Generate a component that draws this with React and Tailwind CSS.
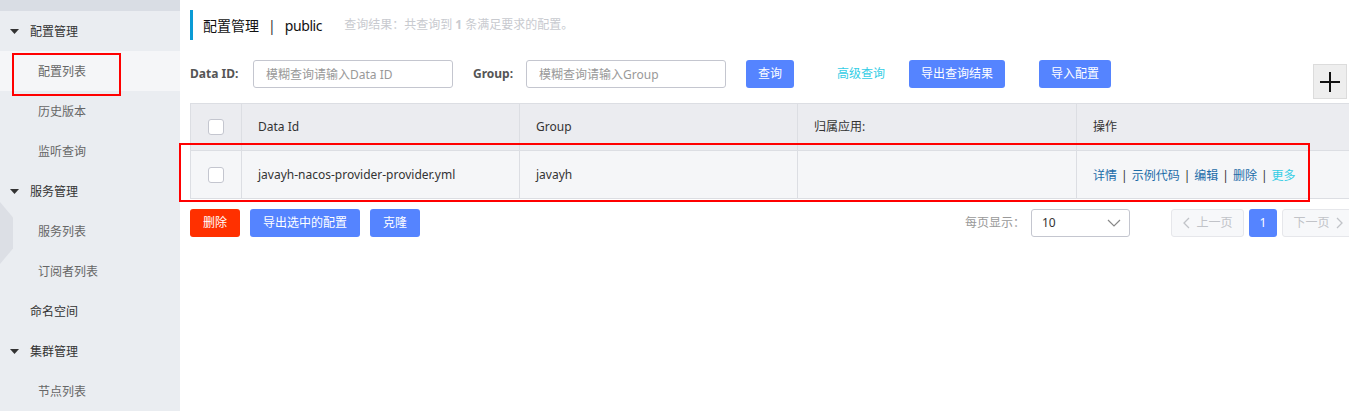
import React from "react";

const FONT = { fontFamily: '"Noto Sans", "Noto Sans CJK SC", sans-serif' };

const MENU = [
  { label: "配置管理", group: true },
  { label: "配置列表", active: true },
  { label: "历史版本" },
  { label: "监听查询" },
  { label: "服务管理", group: true },
  { label: "服务列表" },
  { label: "订阅者列表" },
  { label: "命名空间", top: true },
  { label: "集群管理", group: true },
  { label: "节点列表" },
];

function Caret() {
  return (
    <svg width="9" height="5" viewBox="0 0 9 5" className="mr-[11px]">
      <path d="M0 0 H9 L4.5 5 Z" fill="#333" />
    </svg>
  );
}

function Sidebar() {
  return (
    <div className="relative w-[180px] shrink-0 bg-[#eaedf1] h-full">
      <div className="h-[11px] bg-[#d9dde4]" />
      {MENU.map((m) => (
        <div
          key={m.label}
          className={`h-10 flex items-center pt-[1px] text-[12px] ${
            m.active ? "bg-[#f5f6f8]" : ""
          } ${m.group ? "pl-[10px] text-[#333]" : m.top ? "pl-[30px] text-[#333]" : "pl-[38px] text-[#666]"}`}
        >
          {m.group && <Caret />}
          {m.label}
        </div>
      ))}
      {/* red highlight box */}
      <div className="absolute left-[12px] top-[53px] w-[109px] h-[43px] border-2 border-[#ff0000]" />
      {/* collapse handle */}
      <div
        className="absolute left-0 top-[202px] w-[13px] h-[62px] bg-[#dcdfe5]"
        style={{ clipPath: "polygon(0 0, 100% 25%, 100% 75%, 0 100%)" }}
      />
    </div>
  );
}

function Btn({ children, className = "" }) {
  return (
    <button
      className={`h-7 px-3 rounded-[3px] text-white text-[12px] bg-[#5584ff] ${className}`}
    >
      {children}
    </button>
  );
}

function Checkbox() {
  return <div className="w-4 h-4 bg-white border border-[#c4c6cf] rounded-[3px]" />;
}

function Sep() {
  return <span className="text-[#333] mx-[4px]">|</span>;
}

export default function App() {
  return (
    <div className="flex h-[411px] w-[1349px] overflow-hidden bg-white" style={FONT}>
      <Sidebar />
      <div className="relative w-[1185px] shrink-0 pl-[10px] pr-[10px] pt-[10px]">
        {/* title */}
        <div className="flex items-center h-[30px]">
          <div className="w-[3px] h-[30px] bg-[#0a9bd5] mr-[10px]" />
          <span className="text-[14px] text-[#111]">配置管理</span>
          <span className="text-[14px] text-[#333] mx-[9px]">|</span>
          <span className="text-[14px] text-[#111] tracking-[-0.4px]">public</span>
          <span className="ml-[22px] text-[12px] text-[#c8cacf]">
            查询结果：共查询到 <b className="font-bold">1</b> 条满足要求的配置。
          </span>
        </div>

        {/* search row */}
        <div className="flex items-center mt-[20px] h-7">
          <span className="text-[12px] font-bold text-[#555] w-[51px]">Data ID:</span>
          <input
            className="ml-3 w-[200px] h-7 border border-[#c4c6cf] rounded-[3px] px-3 text-[12px] placeholder-[#999] outline-none"
            placeholder="模糊查询请输入Data ID"
          />
          <span className="ml-5 text-[12px] font-bold text-[#555] w-[41px]">Group:</span>
          <input
            className="ml-3 w-[200px] h-7 border border-[#c4c6cf] rounded-[3px] px-3 text-[12px] placeholder-[#999] outline-none"
            placeholder="模糊查询请输入Group"
          />
          <Btn className="ml-5">查询</Btn>
          <span className="ml-[43px] text-[12px] text-[#33cde5]">高级查询</span>
          <Btn className="ml-6">导出查询结果</Btn>
          <Btn className="ml-[34px]">导入配置</Btn>
        </div>

        {/* plus */}
        <div className="absolute left-[1133px] top-[64px] w-[34px] h-[35px] bg-[#eeeeee] border border-[#dcdcdc] flex items-center justify-center">
          <svg width="20" height="20" viewBox="0 0 20 20">
            <path d="M10 0 V20 M0 10 H20" stroke="#111" strokeWidth="2" />
          </svg>
        </div>

        {/* table */}
        <div className="mt-[15px] border border-[#dcdee3] text-[12px]">
          <div className="flex h-[47px] bg-[#ebecf0] text-[#333] border-b border-[#dcdee3]">
            <div className="w-[51px] flex items-center justify-center border-r border-[#dcdee3]">
              <Checkbox />
            </div>
            <div className="w-[278px] flex items-center pl-4 border-r border-[#dcdee3]">Data Id</div>
            <div className="w-[278px] flex items-center pl-4 border-r border-[#dcdee3]">Group</div>
            <div className="w-[279px] flex items-center pl-4 border-r border-[#dcdee3]">归属应用:</div>
            <div className="flex-1 flex items-center pl-4">操作</div>
          </div>
          <div className="flex h-[47px] bg-[#f5f6f8] text-[#333]">
            <div className="w-[51px] flex items-center justify-center border-r border-[#dcdee3]">
              <Checkbox />
            </div>
            <div className="w-[278px] flex items-center pl-4 border-r border-[#dcdee3]">
              javayh-nacos-provider-provider.yml
            </div>
            <div className="w-[278px] flex items-center pl-4 border-r border-[#dcdee3]">javayh</div>
            <div className="w-[279px] border-r border-[#dcdee3]" />
            <div className="flex-1 flex items-center pl-4 pt-[2px] text-[#1c6ca8]">
              <span>详情</span>
              <Sep />
              <span>示例代码</span>
              <Sep />
              <span>编辑</span>
              <Sep />
              <span>删除</span>
              <Sep />
              <span className="text-[#33cde5]">更多</span>
            </div>
          </div>
        </div>

        {/* red box around row */}
        <div className="absolute left-[-1px] top-[143px] w-[1131px] h-[59px] border-2 border-[#ff0000]" />

        {/* bottom bar */}
        <div className="flex items-center mt-[10px] h-7 text-[12px]">
          <button className="h-7 w-[50px] rounded-[3px] text-white bg-[#ff3000]">删除</button>
          <Btn className="ml-[10px] w-[110px]">导出选中的配置</Btn>
          <Btn className="ml-[10px] w-[50px]">克隆</Btn>
          <div className="flex-1" />
          <span className="text-[#999]">每页显示：</span>
          <div className="ml-[6px] w-[99px] h-7 border border-[#c4c6cf] rounded-[3px] flex items-center justify-between pl-[10px] pr-[8px] text-[#333]">
            <span>10</span>
            <svg width="14" height="8" viewBox="0 0 14 8">
              <path d="M1 1 L7 7 L13 1" fill="none" stroke="#888" strokeWidth="1.2" />
            </svg>
          </div>
          <div className="ml-[41px] w-[73px] h-7 border border-[#e6e7eb] bg-[#f7f8fa] rounded-[3px] flex items-center justify-center text-[#c1c3c8]">
            <svg width="8" height="12" viewBox="0 0 8 12" className="mr-[6px]">
              <path d="M7 1 L2 6 L7 11" fill="none" stroke="#c1c3c8" strokeWidth="1.3" />
            </svg>
            上一页
          </div>
          <div className="ml-[5px] w-[28px] h-7 bg-[#5584ff] rounded-[3px] flex items-center justify-center text-white">1</div>
          <div className="ml-[5px] w-[73px] h-7 border border-[#e6e7eb] bg-[#f7f8fa] rounded-[3px] flex items-center justify-center text-[#c1c3c8]">
            下一页
            <svg width="8" height="12" viewBox="0 0 8 12" className="ml-[6px]">
              <path d="M1 1 L6 6 L1 11" fill="none" stroke="#c1c3c8" strokeWidth="1.3" />
            </svg>
          </div>
        </div>
      </div>
    </div>
  );
}
